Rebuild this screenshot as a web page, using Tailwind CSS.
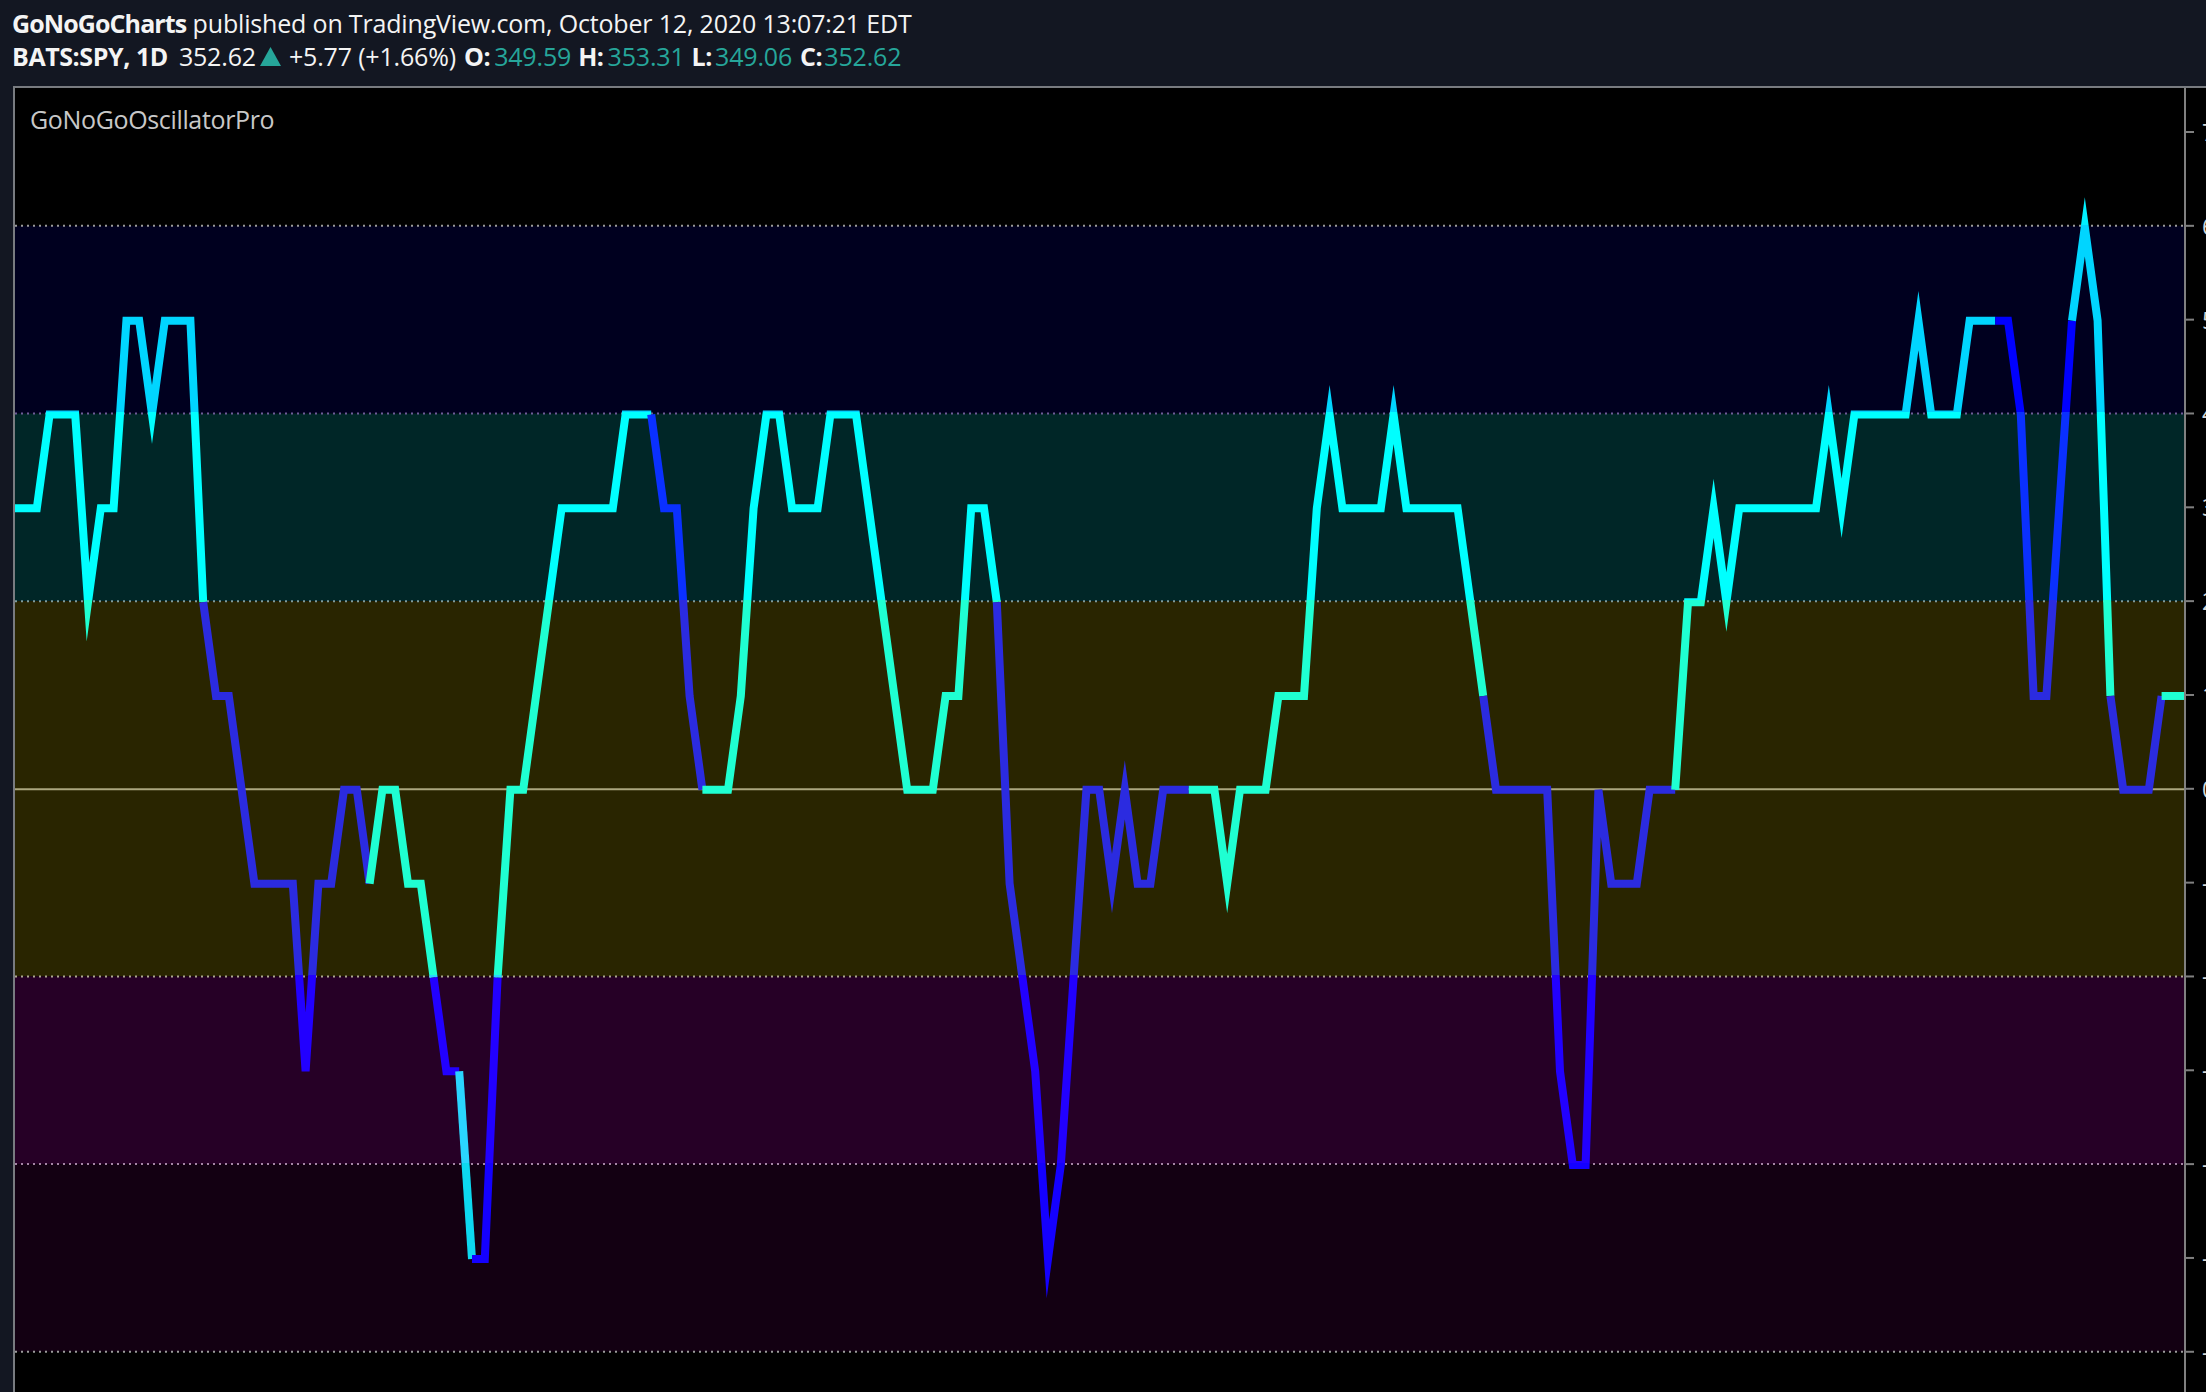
<!DOCTYPE html>
<html lang="en">
<head>
<meta charset="UTF-8">
<title>GoNoGoOscillatorPro</title>
<script src="https://cdn.jsdelivr.net/npm/@tailwindcss/browser@4"></script>
</head>
<body class="bg-black">
<div class="w-[2206px] h-[1392px] flex flex-col overflow-hidden bg-[#131722] font-['Open_Sans',sans-serif]">
    <!-- Header -->
    <header class="h-[86px] shrink-0 pl-3 pt-[7px] text-[25px] leading-[33px] tracking-[-0.17px] text-[#f4f4f4] whitespace-nowrap">
        <div><b class="font-bold tracking-[-0.9px]">GoNoGoCharts</b> published on TradingView.com, October 12, 2020 13:07:21 EDT</div>
        <div class="flex items-center">
            <b class="font-bold tracking-[-0.42px] mr-[11px]">BATS:SPY, 1D</b>
            <span>352.62</span>
            <svg class="w-[21px] h-[19px] ml-[4px] mr-[8px]" viewBox="0 0 21 19"><path d="M10.5 0L21 19H0z" fill="#26a69a"/></svg>
            <span class="mr-[8px]">+5.77 (+1.66%)</span>
            <b class="font-bold tracking-[-0.42px]">O:</b><span class="text-[#26a69a] ml-[4px] mr-[7px]">349.59</span>
            <b class="font-bold tracking-[-0.42px]">H:</b><span class="text-[#26a69a] ml-[4px] mr-[7px]">353.31</span>
            <b class="font-bold tracking-[-0.42px]">L:</b><span class="text-[#26a69a] ml-[3px] mr-[8px]">349.06</span>
            <b class="font-bold tracking-[-0.42px]">C:</b><span class="text-[#26a69a] ml-[2px]">352.62</span>
        </div>
    </header>

    <!-- Chart -->
    <main class="flex-1 pl-[13px]">
        <div class="relative w-[2193px] h-[1306px] bg-black border-l-2 border-t-2 border-[#787b80] overflow-hidden">
            <div class="absolute left-[15px] top-[16px] text-[25px] leading-[30px] tracking-[-0.35px] text-[#c8c8c8]">GoNoGoOscillatorPro</div>
            <svg id="chart" class="block" width="2191" height="1304" viewBox="15 88 2191 1304" xmlns="http://www.w3.org/2000/svg">
                <defs>
                    <linearGradient id="go" gradientUnits="userSpaceOnUse" x1="0" y1="0" x2="0" y2="1392">
                        <stop offset="0.1618" stop-color="#00f0ff"/><stop offset="0.1618" stop-color="#00d5ff"/>
                        <stop offset="0.2962" stop-color="#00d5ff"/><stop offset="0.2962" stop-color="#00ffff"/>
                        <stop offset="0.4310" stop-color="#00ffff"/><stop offset="0.4310" stop-color="#1fffd2"/>
                        <stop offset="0.7006" stop-color="#1fffd2"/><stop offset="0.7006" stop-color="#2ad5ff"/>
                        <stop offset="0.8354" stop-color="#2ad5ff"/><stop offset="0.8354" stop-color="#0dd8f0"/>
                    </linearGradient>
                    <linearGradient id="nogo" gradientUnits="userSpaceOnUse" x1="0" y1="0" x2="0" y2="1392">
                        <stop offset="0.2962" stop-color="#0000ff"/><stop offset="0.2962" stop-color="#0a30ff"/>
                        <stop offset="0.4310" stop-color="#0a30ff"/><stop offset="0.4310" stop-color="#2b2be0"/>
                        <stop offset="0.7006" stop-color="#2b2be0"/><stop offset="0.7006" stop-color="#2200ff"/>
                        <stop offset="0.8354" stop-color="#2200ff"/><stop offset="0.8354" stop-color="#1400ff"/>
                    </linearGradient>
                </defs>
            </svg>
        </div>
    </main>
</div>

<script>
    const NS = 'http://www.w3.org/2000/svg';
    const svg = document.getElementById('chart');
    const yOf = v => 788.8 - 9.383 * v;
    const xOf = n => 11.2 + 12.8 * n;

    function add(tag, attrs, text) {
        const el = document.createElementNS(NS, tag);
        for (const k in attrs) el.setAttribute(k, attrs[k]);
        if (text) el.textContent = text;
        svg.appendChild(el);
    }

    // zone fills
    const bands = [[60, 40, '#00001f'], [40, 20, '#002627'], [20, -20, '#292500'], [-20, -40, '#260026'], [-40, -60, '#130012']];
    bands.forEach(([a, b, fill]) => add('rect', { x: 15, y: yOf(a), width: 2170, height: yOf(b) - yOf(a), fill }));

    // dotted levels
    const levels = [[60, '#9a9a9a'], [40, '#6e5c98'], [20, '#7f9c9c'], [-20, '#aca88e'], [-40, '#a484a4'], [-60, '#9c9c9c']];
    levels.forEach(([v, stroke]) => add('line', { x1: 15, x2: 2184, y1: yOf(v), y2: yOf(v), stroke, 'stroke-width': 2, 'stroke-dasharray': '2 4' }));
    add('line', { x1: 15, x2: 2184, y1: yOf(0) + 0.5, y2: yOf(0) + 0.5, stroke: '#aba77f', 'stroke-width': 2 });

    // oscillator values, one per bar
    const data = [30, 30, 30, 40, 40, 40, 20, 30, 30, 50, 50, 40, 50, 50, 50, 20, 10, 10, 0, -10,
        -10, -10, -10, -30, -10, -10, 0, 0, -10, 0, 0, -10, -10, -20, -30, -30, -50, -50, -20, 0,
        0, 10, 20, 30, 30, 30, 30, 30, 40, 40, 40, 30, 30, 10, 0, 0, 0, 10, 30, 40,
        40, 30, 30, 30, 40, 40, 40, 30, 20, 10, 0, 0, 0, 10, 10, 30, 30, 20, -10, -20,
        -30, -50, -40, -20, 0, 0, -10, 0, -10, -10, 0, 0, 0, 0, 0, -10, 0, 0, 0, 10,
        10, 10, 30, 40, 30, 30, 30, 30, 40, 30, 30, 30, 30, 30, 20, 10, 0, 0, 0, 0,
        0, -30, -40, -40, 0, -10, -10, -10, 0, 0, 0, 20, 20, 30, 20, 30, 30, 30, 30, 30,
        30, 30, 40, 30, 40, 40, 40, 40, 40, 50, 40, 40, 40, 50, 50, 50, 50, 40, 10, 10,
        30, 50, 60, 50, 10, 0, 0, 0, 10, 10, 10];

    // [first bar, last bar, colour series]
    const runs = [[0, 15, 'go'], [15, 28, 'nogo'], [28, 33, 'go'], [33, 35, 'nogo'], [35, 36, 'go'], [36, 38, 'nogo'],
        [38, 50, 'go'], [50, 54, 'nogo'], [54, 77, 'go'], [77, 92, 'nogo'], [92, 115, 'go'], [115, 130, 'nogo'],
        [130, 155, 'go'], [155, 161, 'nogo'], [161, 164, 'go'], [164, 168, 'nogo'], [168, 170, 'go']];

    runs.forEach(([a, b, id]) => {
        const pts = [];
        for (let n = a; n <= b; n++) pts.push(xOf(n) + ',' + (yOf(data[n]) + 1));
        add('polyline', { points: pts.join(' '), fill: 'none', stroke: 'url(#' + id + ')', 'stroke-width': 8, 'stroke-linejoin': 'miter', 'stroke-miterlimit': 10 });
    });

    // right axis covers the line ends
    add('rect', { x: 2185, y: 88, width: 21, height: 1304, fill: '#000' });
    add('line', { x1: 2185, x2: 2185, y1: 88, y2: 1392, stroke: '#808080', 'stroke-width': 2 });
    for (let v = 70; v >= -60; v -= 10) {
        add('line', { x1: 2185, x2: 2194, y1: yOf(v), y2: yOf(v), stroke: '#808080', 'stroke-width': 2 });
        add('text', { x: 2202, y: yOf(v) + 9, fill: '#d6d6d6', 'font-size': 23, 'font-family': 'Open Sans, sans-serif' }, String(v));
    }
</script>
</body>
</html>
